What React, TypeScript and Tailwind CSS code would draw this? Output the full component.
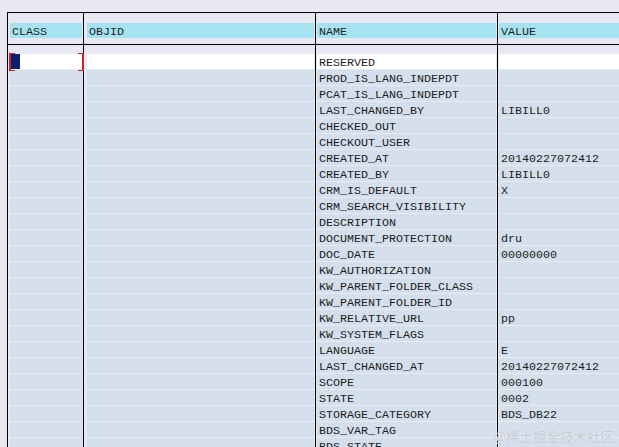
import React from "react"

const rows: [string, string][] = [
  ["RESERVED", ""],
  ["PROD_IS_LANG_INDEPDT", ""],
  ["PCAT_IS_LANG_INDEPDT", ""],
  ["LAST_CHANGED_BY", "LIBILL0"],
  ["CHECKED_OUT", ""],
  ["CHECKOUT_USER", ""],
  ["CREATED_AT", "20140227072412"],
  ["CREATED_BY", "LIBILL0"],
  ["CRM_IS_DEFAULT", "X"],
  ["CRM_SEARCH_VISIBILITY", ""],
  ["DESCRIPTION", ""],
  ["DOCUMENT_PROTECTION", "dru"],
  ["DOC_DATE", "00000000"],
  ["KW_AUTHORIZATION", ""],
  ["KW_PARENT_FOLDER_CLASS", ""],
  ["KW_PARENT_FOLDER_ID", ""],
  ["KW_RELATIVE_URL", "pp"],
  ["KW_SYSTEM_FLAGS", ""],
  ["LANGUAGE", "E"],
  ["LAST_CHANGED_AT", "20140227072412"],
  ["SCOPE", "000100"],
  ["STATE", "0002"],
  ["STORAGE_CATEGORY", "BDS_DB22"],
  ["BDS_VAR_TAG", ""],
  ["BDS_STATE", ""],
]

function Column({
  title,
  width,
  pad,
  cells,
  first,
}: {
  title: string
  width: string
  pad: string
  cells: string[]
  first?: boolean
}) {
  return (
    <div className={`flex flex-col border-l border-black shrink-0 ${width}`}>
      <div className={`h-[33px] border-t border-b border-black pt-[10px] pr-[1px] ${pad}`}>
        <div className="h-[15px] bg-[#a6e3f0] pl-[2px] leading-[18px]">{title}</div>
      </div>
      <div className={`pt-[9px] pr-[1px] ${pad}`}>
        {cells.map((c, i) => (
          <div
            key={i}
            className={`relative h-[16px] border-b border-[#e6ebf4] pl-[2px] leading-[19px] whitespace-nowrap ${
              i === 0 ? "bg-white" : "bg-[#d5dfeb]"
            }`}
          >
            {c}
            {first && i === 0 && (
              <>
                <div className="absolute left-[1px] top-0 w-[9px] h-[15px] bg-[#0c1f6e]" />
                <div className="absolute z-10 left-[-1px] top-[-1px] w-[6px] h-[18px] border-l-2 border-t border-b border-[#c4262a]" />
                <div className="absolute z-10 right-[-2px] top-[-1px] w-[6px] h-[18px] border-r-2 border-t border-b border-[#c4262a]" />
              </>
            )}
          </div>
        ))}
      </div>
    </div>
  )
}

export default function App() {
  const blank = rows.map(() => "")
  return (
    <div
      className="relative w-[619px] h-[447px] overflow-hidden bg-[#e8e8f2] text-[#1c1c1c] text-[11.67px]"
      style={{ fontFamily: '"Liberation Mono", "Courier New", monospace' }}
    >
      <div className="flex pl-[7px] pt-[12px]">
        <Column title="CLASS" width="w-[76px]" pad="pl-[2px]" cells={blank} first />
        <Column title="OBJID" width="w-[232px]" pad="pl-[3px]" cells={blank} />
        <Column title="NAME" width="w-[182px]" pad="pl-[1px]" cells={rows.map((r) => r[0])} />
        <Column title="VALUE" width="w-[130px]" pad="pl-[1px]" cells={rows.map((r) => r[1])} />
      </div>
      <div
        className="absolute right-[5px] bottom-[1px] text-[13.5px] text-[#c5cad3]"
        style={{ fontFamily: '"Noto Sans CJK SC", "Noto Sans", sans-serif', textShadow: "0 0 1px #f4f6fa" }}
      >
        @稀土掘金技术社区
      </div>
    </div>
  )
}
